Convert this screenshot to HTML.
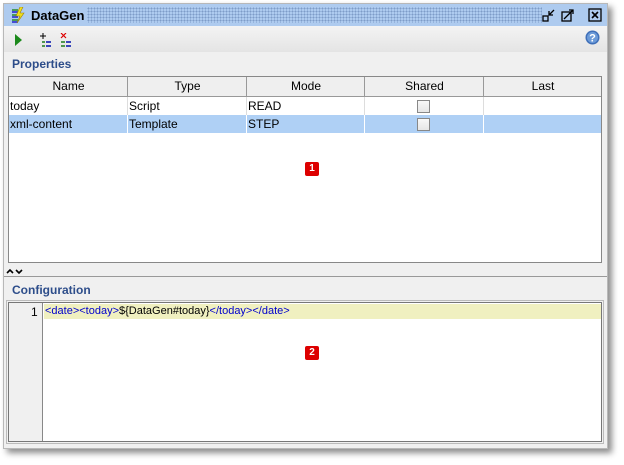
<!DOCTYPE html>
<html><head><style>
*{margin:0;padding:0;box-sizing:border-box}
body{width:624px;height:465px;background:#fff;font-family:"Liberation Sans",sans-serif;font-size:12px;position:relative;overflow:hidden}
.win{position:absolute;left:3px;top:3px;width:605px;height:446px;background:#f0f0f0;border:1px solid #b8b8b8;box-shadow:4px 4px 6px rgba(0,0,0,.45)}
.title{position:absolute;left:0;top:0;width:603px;height:22px;background:#aecbef}
.dots{position:absolute;left:83px;top:3px;width:455px;height:16px;background-image:radial-gradient(#7e9cc8 0.8px,transparent 0.9px);background-size:3px 3px}
.tb{position:absolute;left:0;top:22px;width:603px;height:26px;background:linear-gradient(#f4f4f4,#e4e4e4)}
.lbl{position:absolute;font-weight:bold;color:#2d4d8a;font-size:12px}
.tbl{position:absolute;left:4px;top:72px;width:594px;height:187px;background:#fff;border:1px solid #888}
.row{position:absolute;left:0;width:592px;height:18px}
.c{position:absolute;top:0;height:100%;border-right:1px solid #ddd;padding-left:1px;line-height:18px;font-size:12px}
.hd .c{background:#efefef;text-align:center;border-right:1px solid #999;border-bottom:1px solid #999}
.cb{position:absolute;left:52px;top:3px;width:13px;height:13px;border:1px solid #888;background:linear-gradient(#f8f8f8,#e6e6e6)}
.badge{position:absolute;width:14px;height:14px;background:#d00;border-radius:2px;color:#fff;font-weight:bold;font-size:10px;text-align:center;line-height:14px}
.ed{position:absolute;left:4px;top:298px;width:594px;height:140px;border:1px solid #777;background:#fff;outline:1px solid #bbb;outline-offset:1px}
</style></head><body>
<div class="win">
 <div class="title">
  <svg style="position:absolute;left:7px;top:3px" width="14" height="16"><path d="M1 3h6M1 8h6M1 13h6" stroke="#2a8a2a" stroke-width="1.5"/><path d="M1 5h6M1 10h6M1 15h6" stroke="#22c" stroke-width="1.5"/><path d="M9 0L5 9h4l-3 7 7-10h-4l3-6z" fill="#f0e020" stroke="#a08000" stroke-width=".6"/></svg>
  <span style="position:absolute;left:27px;top:4px;font-weight:bold;font-size:13px">DataGen</span>
  <div class="dots"></div>
  <svg style="position:absolute;left:538px;top:4px" width="60" height="15"><rect x="1" y="8" width="5" height="5" fill="none" stroke="#000" stroke-width="1.3"/><path d="M12 2l-5 5M7 3v4h4" stroke="#000" stroke-width="1.3" fill="none"/><rect x="20" y="4" width="9" height="9" fill="none" stroke="#000" stroke-width="1.3"/><path d="M22 11l9-9M27 2h4v4" stroke="#000" stroke-width="1.3" fill="none"/><rect x="47" y="1" width="12" height="12" fill="none" stroke="#000" stroke-width="1.3"/><path d="M50 4l6 6M56 4l-6 6" stroke="#000" stroke-width="1.6"/></svg>
 </div>
 <div class="tb">
  <svg style="position:absolute;left:9px;top:7px" width="70" height="14"><path d="M2 1l7 6-7 6z" fill="#1c8a1c"/><path d="M27 3h6M30 0v6" stroke="#000"/><path d="M29 9h3M33 9h5M29 13h3M33 13h5" stroke="#1a7a1a" stroke-width="1.4"/><path d="M33 9h5M33 13h5" stroke="#22c" stroke-width="1.4"/><path d="M48 0l5 5M53 0l-5 5" stroke="#d00" stroke-width="1.2"/><path d="M48 9h4M53 9h5M48 13h4M53 13h5" stroke="#1a7a1a" stroke-width="1.4"/><path d="M53 9h5M53 13h5" stroke="#22c" stroke-width="1.4"/></svg>
  <svg style="position:absolute;left:581px;top:4px" width="15" height="15"><circle cx="7.5" cy="7.5" r="7" fill="#3f6fb8"/><circle cx="7.5" cy="7.5" r="5.5" fill="#6b9ad8"/><text x="7.5" y="11.5" font-size="11" font-weight="bold" fill="#fff" text-anchor="middle" font-family="Liberation Sans">?</text></svg>
 </div>
 <div class="lbl" style="left:8px;top:53px">Properties</div>
 <div class="tbl">
  <div class="row hd" style="top:0;height:20px">
   <div class="c" style="left:0;width:119px">Name</div><div class="c" style="left:119px;width:119px">Type</div><div class="c" style="left:238px;width:118px">Mode</div><div class="c" style="left:356px;width:119px">Shared</div><div class="c" style="left:475px;width:117px;border-right:none">Last</div>
  </div>
  <div class="row" style="top:20px">
   <div class="c" style="left:0;width:119px">today</div><div class="c" style="left:119px;width:119px">Script</div><div class="c" style="left:238px;width:118px">READ</div><div class="c" style="left:356px;width:119px"><div class="cb"></div></div><div class="c" style="left:475px;width:117px;border:none"></div>
  </div>
  <div class="row" style="top:38px;background:#afd0f5">
   <div class="c" style="left:0;width:119px;border-color:#fff">xml-content</div><div class="c" style="left:119px;width:119px;border-color:#fff">Template</div><div class="c" style="left:238px;width:118px;border-color:#fff">STEP</div><div class="c" style="left:356px;width:119px;border-color:#fff"><div class="cb"></div></div><div class="c" style="left:475px;width:117px;border:none"></div>
  </div>
  <div class="badge" style="left:296px;top:85px">1</div>
 </div>
 <svg style="position:absolute;left:2px;top:263px" width="18" height="8"><path d="M1 6l3-3 3 3M10 3l3 3 3-3" stroke="#000" stroke-width="1.6" fill="none"/></svg>
 <div style="position:absolute;left:0;top:272px;width:603px;height:1px;background:#999"></div>
 <div class="lbl" style="left:8px;top:279px">Configuration</div>
 <div class="ed">
  <div style="position:absolute;left:0;top:0;width:34px;height:138px;background:#f0f0f0;border-right:1px solid #888"></div>
  <div style="position:absolute;left:22px;top:2px;font-size:12px">1</div>
  <div style="position:absolute;left:35px;top:1px;width:557px;height:15px;background:#f0f0c0"></div>
  <div style="position:absolute;left:36px;top:2px;font-size:11px;color:#00c">&lt;date&gt;&lt;today&gt;<span style="color:#000">${DataGen#today}</span>&lt;/today&gt;&lt;/date&gt;</div>
  <div class="badge" style="left:296px;top:43px">2</div>
 </div>
</div>
</body></html>
